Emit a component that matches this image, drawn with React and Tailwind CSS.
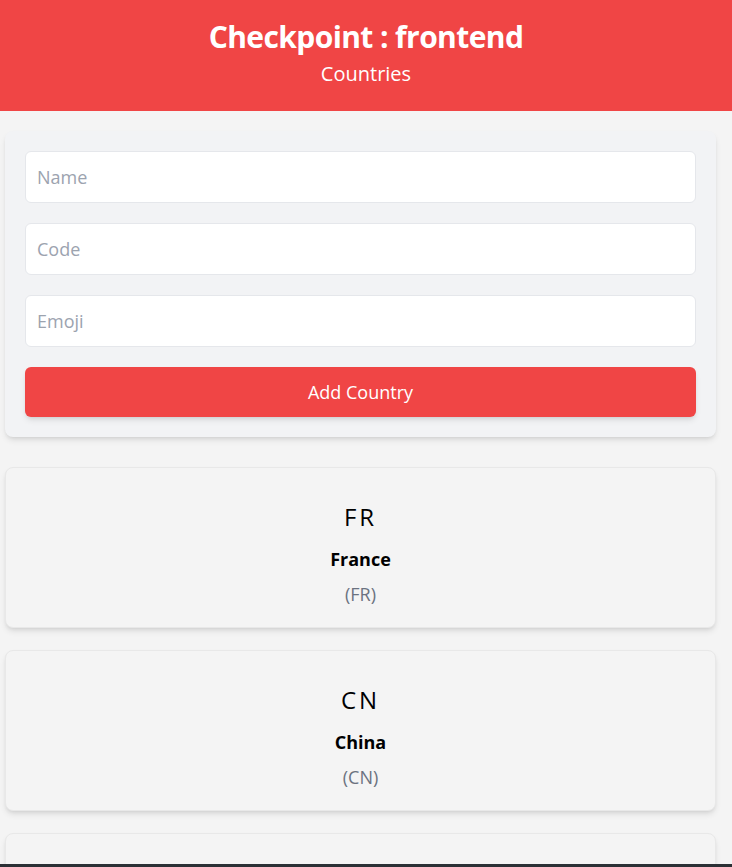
const COUNTRIES = [
  { name: 'France', code: 'FR' },
  { name: 'China', code: 'CN' },
  { name: 'Japan', code: 'JP' },
];

export default function App() {
  return (
    <div className="min-h-screen bg-[#f4f4f4] font-['Open_Sans','Noto_Sans',sans-serif]">
      <header className="bg-[#f04545] h-[111px] flex flex-col items-center pt-[18px] text-white">
        <h1 className="text-[30px] font-bold leading-[38px] tracking-[-0.6px]">Checkpoint : frontend</h1>
        <p className="text-[20px] leading-[28px] mt-[4px]">Countries</p>
      </header>

      <div className="pl-[5px] pr-[16px] pt-[20px] pb-[30px]">
        <form className="bg-[#f2f3f5] rounded-lg shadow-md p-[20px] flex flex-col gap-[20px]">
          {['Name', 'Code', 'Emoji'].map((p) => (
            <input
              key={p}
              placeholder={p}
              className="h-[52px] w-full bg-white border border-[#e5e7eb] rounded-md px-[11px] text-lg placeholder:text-[#9ca3af] focus:outline-none"
            />
          ))}
          <button type="button" className="h-[50px] w-full bg-[#f04545] text-white text-lg rounded-md shadow-md">
            Add Country
          </button>
        </form>
      </div>

      <div className="pl-[5px] pr-[16px] flex flex-col gap-[22px] pb-6">
        {COUNTRIES.map((c) => (
          <div key={c.code} className="bg-[#f4f4f4] border border-[#e8e8e8] rounded-lg shadow-md h-[161px] flex flex-col items-center pt-[33px]">
            <div className="text-2xl leading-[32px] tracking-[3px] text-black">{c.code}</div>
            <div className="text-lg font-bold leading-[28px] mt-[12px] text-black">{c.name}</div>
            <div className="text-lg leading-[28px] mt-[7px] text-[#6b7280]">({c.code})</div>
          </div>
        ))}
      </div>

      <div className="fixed bottom-0 left-0 right-0 h-[3px] bg-[#2b3035]" />
    </div>
  );
}
